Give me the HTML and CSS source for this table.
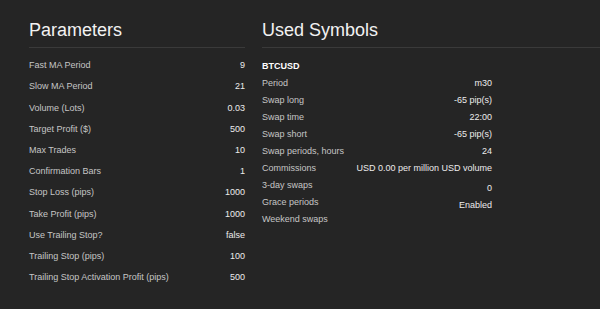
FILE: index.html
```html
<!DOCTYPE html>
<html lang="en">
<head>
  <meta charset="UTF-8" />
  <title>Backtest Report</title>
  <link rel="stylesheet" href="styles.css">
</head>
<body>
  <main class="report">
    <section class="params">
      <h2 class="title">Parameters</h2>
      <div class="params__list">
        <span class="label">Fast MA Period</span><span class="value">9</span>
        <span class="label">Slow MA Period</span><span class="value">21</span>
        <span class="label">Volume (Lots)</span><span class="value">0.03</span>
        <span class="label">Target Profit ($)</span><span class="value">500</span>
        <span class="label">Max Trades</span><span class="value">10</span>
        <span class="label">Confirmation Bars</span><span class="value">1</span>
        <span class="label">Stop Loss (pips)</span><span class="value">1000</span>
        <span class="label">Take Profit (pips)</span><span class="value">1000</span>
        <span class="label">Use Trailing Stop?</span><span class="value">false</span>
        <span class="label">Trailing Stop (pips)</span><span class="value">100</span>
        <span class="label">Trailing Stop Activation Profit (pips)</span><span class="value">500</span>
      </div>
    </section>

    <section class="symbols">
      <h2 class="title">Used Symbols</h2>
      <div class="symbols__list">
        <span class="symbol">BTCUSD</span><span></span>
        <span class="label">Period</span><span class="value">m30</span>
        <span class="label">Swap long</span><span class="value">-65 pip(s)</span>
        <span class="label">Swap time</span><span class="value">22:00</span>
        <span class="label">Swap short</span><span class="value">-65 pip(s)</span>
        <span class="label">Swap periods, hours</span><span class="value">24</span>
        <span class="label">Commissions</span><span class="value">USD 0.00 per million USD volume</span>
        <span class="label">3-day swaps</span><span class="value value--low">0</span>
        <span class="label">Grace periods</span><span class="value value--low">Enabled</span>
        <span class="label">Weekend swaps</span><span></span>
      </div>
    </section>
  </main>
</body>
</html>
```

FILE: styles.css
```css
body {
  margin: 0;
  background-color: #252525;
  color: #c9c9c9;
  font-family: 'Liberation Sans', Arial, sans-serif;
}

.report {
  display: flex;
  gap: 17px;
  padding: 20px 0 0 29px;
  height: 309px;
  box-sizing: border-box;
}

.params {
  width: 216px;
}

.symbols {
  flex: 1;
}

.title {
  margin: 0;
  padding-bottom: 5px;
  font-size: 18px;
  font-weight: normal;
  line-height: 1.2;
  color: #f2f2f2;
  border-bottom: 1px solid #3a3a3a;
}

.params__list {
  display: grid;
  grid-template-columns: 1fr auto;
  grid-auto-rows: 21.2px;
  align-items: center;
  margin-top: 7px;
  font-size: 9px;
}

.symbols__list {
  display: grid;
  grid-template-columns: 1fr auto;
  grid-auto-rows: 17px;
  align-items: center;
  width: 230px;
  margin-top: 9.5px;
  font-size: 9px;
}

.label {
  color: #c6c6c6;
}

.value {
  text-align: right;
  color: #ececec;
}

.value--low {
  align-self: start;
  padding-top: 7px;
}

.symbol {
  font-weight: bold;
  color: #ffffff;
}
```
